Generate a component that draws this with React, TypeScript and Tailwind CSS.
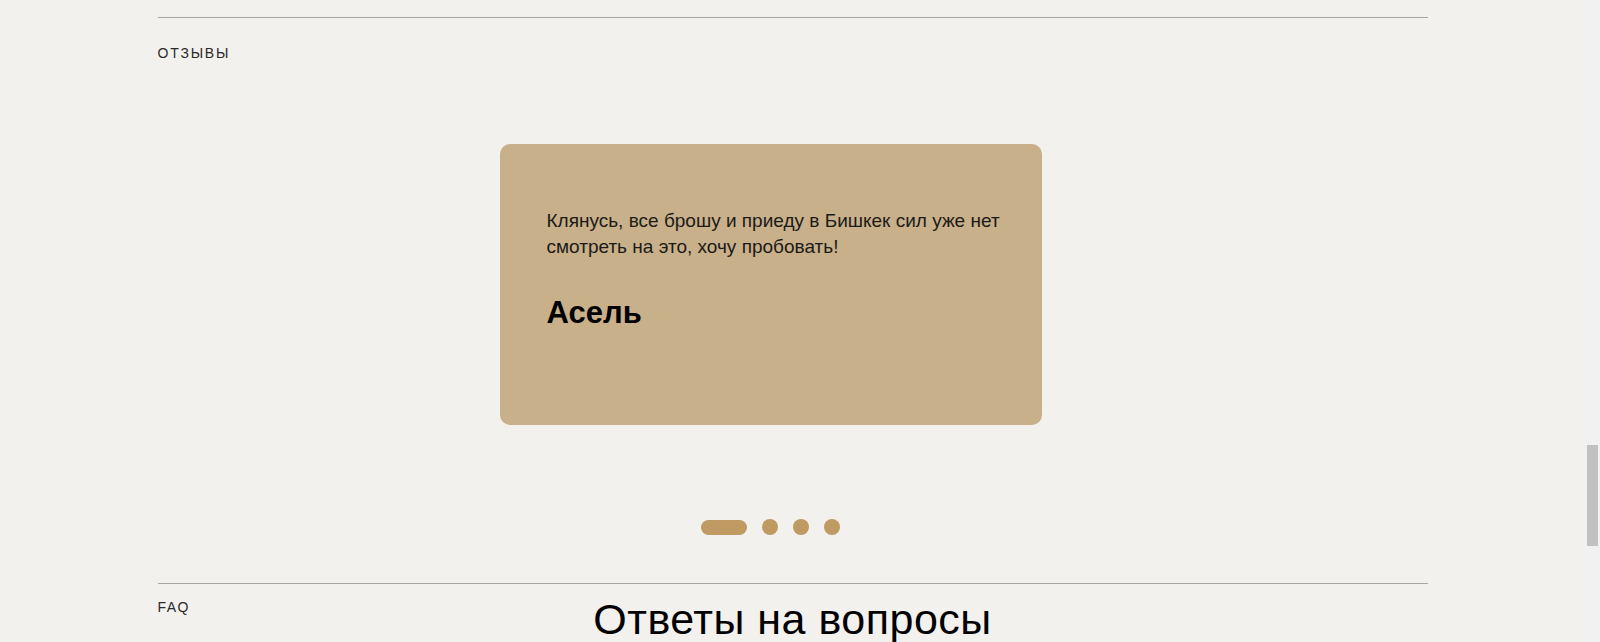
import React from "react"

const font = { fontFamily: '"Liberation Sans", Arial, sans-serif' }

const Dots = ({ count, active }: { count: number; active: number }) => {
  return (
    <div className="flex items-center justify-center gap-[15px]">
      {Array.from({ length: count }).map((_, i) =>
        i === active ? (
          <span key={i} className="block h-[15px] w-[46px] rounded-full bg-[#bf9a63]" />
        ) : (
          <span key={i} className="block h-[16px] w-[16px] rounded-full bg-[#bf9a63]" />
        )
      )}
    </div>
  )
}

const ReviewCard = ({ text, name }: { text: string; name: string }) => {
  return (
    <div className="h-[281px] w-[542px] rounded-[10px] bg-[#c8b08b] pl-[47px] pr-[26px] pt-[64px]">
      <p className="text-[19px] leading-[26px] text-[#1c1a16]">{text}</p>
      <h3 className="mt-[35px] text-[31px] font-bold leading-[36px] text-black">{name}</h3>
    </div>
  )
}

export default function App() {
  return (
    <div className="flex h-[642px] w-full overflow-hidden bg-[#f2f1ed]" style={font}>
      <main className="flex-1">
        <div className="mx-auto w-[1270px]">
          <section className="border-t border-[#a6a6a4] pt-[25px]" style={{ marginTop: 17 }}>
            <h2 className="text-[14px] leading-[20px] tracking-[1.8px] text-[#2a2a2a]">ОТЗЫВЫ</h2>
            <div className="mt-[81px] pl-[342px]">
              <ReviewCard
                text="Клянусь, все брошу и приеду в Бишкек сил уже нет смотреть на это, хочу пробовать!"
                name="Асель"
              />
              <div className="mt-[94px] w-[541px]">
                <Dots count={4} active={0} />
              </div>
            </div>
          </section>
          <section className="mt-[48px] border-t border-[#a6a6a4]">
            <div className="grid grid-cols-[1fr_auto_1fr] items-start pt-[13px]">
              <span className="text-[14px] leading-[20px] tracking-[1.5px] text-[#2a2a2a]">FAQ</span>
              <h2 className="mt-[1px] text-[43px] leading-none tracking-[0.5px] text-black">Ответы на вопросы</h2>
              <span />
            </div>
          </section>
        </div>
      </main>
      <div className="flex w-[15px] flex-col bg-[#f1f1f1] pt-[445px]">
        <div className="mx-auto h-[101px] w-[11px] bg-[#c1c1c1]" />
      </div>
    </div>
  )
}
